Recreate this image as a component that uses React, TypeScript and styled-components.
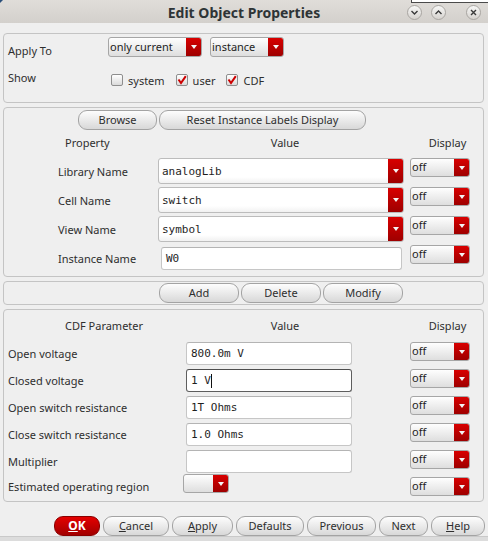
import styled, { createGlobalStyle } from "styled-components";

const GlobalStyle = createGlobalStyle`
  html, body {
    margin: 0;
    padding: 0;
    background: #efefef;
  }
  body {
    font-family: "Noto Sans", "DejaVu Sans", sans-serif;
    font-size: 11px;
    color: #2e2e2e;
  }
`;

const Window = styled.div`
  position: relative;
  width: 488px;
  height: 541px;
  display: flex;
  flex-direction: column;
  background: #efefef;
  overflow: hidden;
`;

const BehindWindow = styled.div`
  position: absolute;
  top: 0;
  right: 0;
  width: 76px;
  height: 2px;
  background: #ffffff;
  border-left: 1px solid #4a4a4a;
  border-bottom: 1px solid #4a4a4a;
`;

const CornerMark = styled.div`
  position: absolute;
  top: 0;
  left: 0;
  width: 0;
  height: 0;
  border-top: 3px solid #2a4f7a;
  border-right: 3px solid transparent;
`;

const TitleBar = styled.div`
  height: 23px;
  flex: none;
  display: flex;
  align-items: center;
  background: linear-gradient(#e0ddd9, #d3d0cc);
`;

const TitleText = styled.div`
  flex: 1;
  text-align: center;
  padding: 1px 0 0 84px;
  font-weight: bold;
  font-size: 14px;
  color: #2e3436;
`;

const TitleButtons = styled.div`
  width: 84px;
  flex: none;
  display: flex;
  align-items: center;
  padding-top: 1px;
`;

const CircleButton = styled.span<{ $gap: number }>`
  width: 15px;
  height: 15px;
  flex: none;
  box-sizing: border-box;
  border-radius: 50%;
  border: 1px solid #a9a6a2;
  background: linear-gradient(#f7f7f6, #d6d3cf);
  display: flex;
  align-items: center;
  justify-content: center;
  margin-left: ${(p) => p.$gap}px;
`;

const Body = styled.div`
  flex: none;
  display: flex;
  flex-direction: column;
  gap: 4px;
  padding: 10px 4px 0 3px;
`;

const Panel = styled.div`
  box-sizing: border-box;
  border: 1px solid #c4c4c4;
  border-radius: 4px;
  background: #efefef;
`;

const ApplyPanel = styled(Panel)`
  height: 70px;
  padding: 3px 4px 0;
  display: grid;
  grid-template-columns: 100px 1fr;
  grid-template-rows: 20px 20px;
  row-gap: 13px;
`;

const FormLabel = styled.div<{ $pad: number }>`
  line-height: 14px;
  padding-top: ${(p) => p.$pad}px;
`;

const ComboRow = styled.div`
  display: flex;
  align-items: center;
  gap: 8px;
`;

const CheckRow = styled.div`
  display: flex;
  align-items: center;
  padding-left: 3px;
`;

const CheckItem = styled.label`
  display: flex;
  align-items: center;
  gap: 5px;
  margin-right: 11px;
`;

const CheckBox = styled.span`
  width: 12px;
  height: 12px;
  box-sizing: border-box;
  border: 1px solid #8e8e8e;
  border-radius: 2px;
  background: linear-gradient(#ffffff, #dadada);
  display: flex;
  align-items: center;
  justify-content: center;
`;

const ComboBox = styled.div<{ $w: number; $h: number; $field?: boolean }>`
  width: ${(p) => p.$w}px;
  height: ${(p) => p.$h}px;
  flex: none;
  box-sizing: border-box;
  display: flex;
  border: 1px solid ${(p) => (p.$field ? "#bcbcbc" : "#a6a6a6")};
  border-radius: 3px;
  background: ${(p) =>
    p.$field
      ? "linear-gradient(#ffffff 75%, #f1f1f1)"
      : "linear-gradient(#fefefe, #dedede)"};
  overflow: hidden;
`;

const ComboText = styled.span<{ $mono?: boolean }>`
  flex: 1;
  display: flex;
  align-items: center;
  padding: 0 0 ${(p) => (p.$mono ? 0 : 2)}px ${(p) => (p.$mono ? 3 : 1)}px;
  font-family: ${(p) =>
    p.$mono ? '"DejaVu Sans Mono", monospace' : "inherit"};
  font-size: 11px;
  color: #1e1e1e;
  white-space: nowrap;
`;

const ComboArrow = styled.span`
  width: 15px;
  flex: none;
  background: linear-gradient(#d80000, #9e0000);
  display: flex;
  align-items: center;
  justify-content: center;
  &::after {
    content: "";
    border-left: 3.5px solid transparent;
    border-right: 3.5px solid transparent;
    border-top: 4px solid #f4f4f4;
  }
`;

const TextField = styled.div<{ $w: number; $focused?: boolean; $inset?: number }>`
  width: ${(p) => p.$w}px;
  height: 23px;
  box-sizing: border-box;
  margin-left: ${(p) => p.$inset ?? 0}px;
  border: 1px solid ${(p) => (p.$focused ? "#5e5e5e" : "#c6c6c6")};
  border-top-color: ${(p) => (p.$focused ? "#4e4e4e" : "#b4b4b4")};
  border-radius: 3px;
  background: #ffffff;
  display: flex;
  align-items: center;
  padding-left: 4px;
  font-family: "DejaVu Sans Mono", monospace;
  font-size: 11px;
  color: #1e1e1e;
  white-space: pre;
`;

const Caret = styled.span`
  display: inline-block;
  width: 1px;
  height: 14px;
  background: #111;
`;

const PropertyPanel = styled(Panel)`
  height: 170px;
  padding: 2px 0 0;
  display: flex;
  flex-direction: column;
`;

const ButtonRow = styled.div<{ $indent: number }>`
  display: flex;
  gap: 2px;
  padding-left: ${(p) => p.$indent}px;
`;

const HeaderRow = styled.div`
  height: 24px;
  display: grid;
  grid-template-columns: 154px 248px 1fr;
  align-items: center;
`;

const HeaderCell = styled.div<{ $left?: boolean }>`
  text-align: ${(p) => (p.$left ? "left" : "center")};
  padding-left: ${(p) => (p.$left ? 61 : 6)}px;
`;

const PropertyRows = styled.div`
  display: grid;
  grid-template-columns: 154px 248px 1fr;
  grid-auto-rows: 26px;
  row-gap: 3px;
  padding-top: 4px;
`;

const PropertyLabel = styled.div`
  align-self: center;
  padding-left: 54px;
`;

const DisplayCell = styled.div<{ $gap: number }>`
  align-self: start;
  padding-left: ${(p) => p.$gap}px;
`;

const ValueCell = styled.div`
  align-self: center;
`;

const ActionPanel = styled(Panel)`
  height: 24px;
  padding-top: 1px;
`;

const CdfPanel = styled(Panel)`
  height: 193px;
  padding-top: 3px;
  display: flex;
  flex-direction: column;
`;

const CdfRows = styled.div`
  display: grid;
  grid-template-columns: 182px 224px 1fr;
  grid-template-rows: repeat(5, 23px) 19px;
  row-gap: 4px;
  padding-top: 5px;
`;

const CdfLabel = styled.div`
  align-self: center;
  padding-left: 4px;
  white-space: nowrap;
`;

const RegionCombo = styled.div`
  align-self: start;
  margin: -3px 0 0 -3px;
`;

const Footer = styled.div`
  height: 35px;
  box-sizing: border-box;
  display: flex;
  justify-content: flex-end;
  gap: 3px;
  padding: 14px 3px 0 0;
`;

const PushButton = styled.button<{ $w: number; $primary?: boolean }>`
  width: ${(p) => p.$w}px;
  height: 20px;
  flex: none;
  box-sizing: border-box;
  padding: 0 0 1px;
  border: 1px solid ${(p) => (p.$primary ? "#8a0000" : "#a3a3a3")};
  border-radius: 9px;
  background: ${(p) =>
    p.$primary
      ? "linear-gradient(#e40000, #a20000)"
      : "linear-gradient(#fdfdfd, #d8d8d8)"};
  font-family: "Noto Sans", "DejaVu Sans", sans-serif;
  font-size: ${(p) => (p.$primary ? 12 : 11)}px;
  font-weight: ${(p) => (p.$primary ? "bold" : "normal")};
  color: ${(p) => (p.$primary ? "#ffffff" : "#2e2e2e")};
  line-height: 1;
`;

const BottomEdge = styled.div`
  flex: none;
  height: 4px;
  background: #dcdcdc;
  border-top: 1px solid #c9c9c9;
`;

function Combo({
  w,
  h = 19,
  text,
  field,
}: {
  w: number;
  h?: number;
  text?: string;
  field?: boolean;
}) {
  return (
    <ComboBox $w={w} $h={h} $field={field}>
      <ComboText $mono={field}>{text}</ComboText>
      <ComboArrow />
    </ComboBox>
  );
}

function Check({ checked, label }: { checked?: boolean; label: string }) {
  return (
    <CheckItem>
      <CheckBox>
        {checked && (
          <svg width="10" height="10" viewBox="0 0 10 10">
            <path
              d="M1.5 4.5 L4 8 L8.8 1.2"
              fill="none"
              stroke="#cc0000"
              strokeWidth="2"
            />
          </svg>
        )}
      </CheckBox>
      {label}
    </CheckItem>
  );
}

const properties = [
  { label: "Library Name", value: "analogLib", combo: true },
  { label: "Cell Name", value: "switch", combo: true },
  { label: "View Name", value: "symbol", combo: true },
  { label: "Instance Name", value: "W0", combo: false },
];

const cdfParams = [
  { label: "Open voltage", value: "800.0m V" },
  { label: "Closed voltage", value: "1 V", focused: true },
  { label: "Open switch resistance", value: "1T Ohms" },
  { label: "Close switch resistance", value: "1.0 Ohms" },
  { label: "Multiplier", value: "" },
];

export default function App() {
  return (
    <Window>
      <GlobalStyle />
      <TitleBar>
        <TitleText>Edit Object Properties</TitleText>
        <TitleButtons>
          <CircleButton $gap={3}>
            <svg width="9" height="9" viewBox="0 0 9 9">
              <path d="M1.5 3 L4.5 6 L7.5 3" fill="none" stroke="#3a3a3a" strokeWidth="1.4" />
            </svg>
          </CircleButton>
          <CircleButton $gap={9}>
            <svg width="9" height="9" viewBox="0 0 9 9">
              <path d="M1.5 6 L4.5 3 L7.5 6" fill="none" stroke="#3a3a3a" strokeWidth="1.4" />
            </svg>
          </CircleButton>
          <CircleButton $gap={20}>
            <svg width="9" height="9" viewBox="0 0 9 9">
              <path d="M2 2 L7 7 M7 2 L2 7" fill="none" stroke="#3a3a3a" strokeWidth="1.4" />
            </svg>
          </CircleButton>
        </TitleButtons>
      </TitleBar>

      <Body>
        <ApplyPanel>
          <FormLabel $pad={7}>Apply To</FormLabel>
          <ComboRow>
            <Combo w={94} h={20} text="only current" />
            <Combo w={74} h={20} text="instance" />
          </ComboRow>
          <FormLabel $pad={1}>Show</FormLabel>
          <CheckRow>
            <Check label="system" />
            <Check checked label="user" />
            <Check checked label="CDF" />
          </CheckRow>
        </ApplyPanel>

        <PropertyPanel>
          <ButtonRow $indent={74}>
            <PushButton $w={79}>Browse</PushButton>
            <PushButton $w={207}>Reset Instance Labels Display</PushButton>
          </ButtonRow>
          <HeaderRow>
            <HeaderCell $left>Property</HeaderCell>
            <HeaderCell>Value</HeaderCell>
            <HeaderCell>Display</HeaderCell>
          </HeaderRow>
          <PropertyRows>
            {properties.map((p) => (
              <>
                <PropertyLabel key={p.label + "l"}>{p.label}</PropertyLabel>
                <ValueCell key={p.label + "v"}>
                  {p.combo ? (
                    <Combo w={246} h={26} text={p.value} field />
                  ) : (
                    <TextField $w={241} $inset={3}>
                      {p.value}
                    </TextField>
                  )}
                </ValueCell>
                <DisplayCell key={p.label + "d"} $gap={4}>
                  <Combo w={60} text="off" />
                </DisplayCell>
              </>
            ))}
          </PropertyRows>
        </PropertyPanel>

        <ActionPanel>
          <ButtonRow $indent={155}>
            <PushButton $w={80}>Add</PushButton>
            <PushButton $w={80}>Delete</PushButton>
            <PushButton $w={80}>Modify</PushButton>
          </ButtonRow>
        </ActionPanel>

        <CdfPanel>
          <HeaderRow>
            <HeaderCell $left>CDF Parameter</HeaderCell>
            <HeaderCell>Value</HeaderCell>
            <HeaderCell>Display</HeaderCell>
          </HeaderRow>
          <CdfRows>
            {cdfParams.map((c) => (
              <>
                <CdfLabel key={c.label + "l"}>{c.label}</CdfLabel>
                <TextField key={c.label + "v"} $w={166} $focused={c.focused}>
                  {c.value}
                  {c.focused && <Caret />}
                </TextField>
                <DisplayCell key={c.label + "d"} $gap={0}>
                  <Combo w={60} text="off" />
                </DisplayCell>
              </>
            ))}
            <CdfLabel>Estimated operating region</CdfLabel>
            <RegionCombo>
              <Combo w={46} />
            </RegionCombo>
            <DisplayCell $gap={0}>
              <Combo w={60} text="off" />
            </DisplayCell>
          </CdfRows>
        </CdfPanel>
      </Body>

      <Footer>
        <PushButton $w={46} $primary>
          <u>O</u>K
        </PushButton>
        <PushButton $w={66}>
          <u>C</u>ancel
        </PushButton>
        <PushButton $w={61}>
          <u>A</u>pply
        </PushButton>
        <PushButton $w={68}>Defaults</PushButton>
        <PushButton $w={69}>Previous</PushButton>
        <PushButton $w={49}>Next</PushButton>
        <PushButton $w={54}>
          <u>H</u>elp
        </PushButton>
      </Footer>
      <BottomEdge />

      <BehindWindow />
      <CornerMark />
    </Window>
  );
}
